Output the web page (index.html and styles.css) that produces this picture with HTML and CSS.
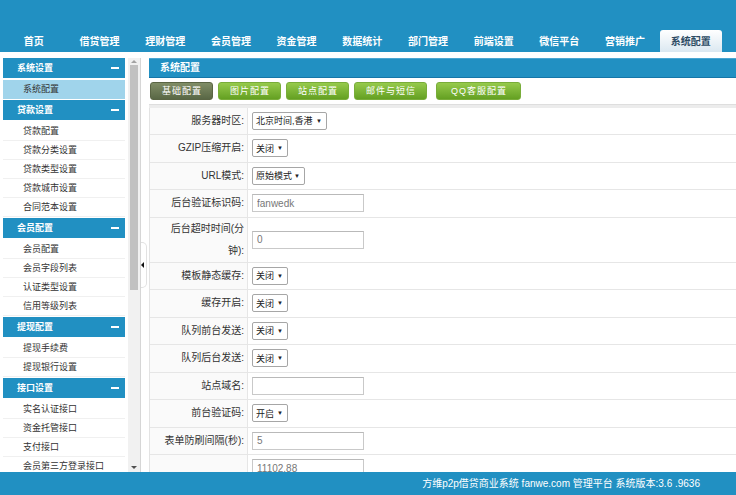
FILE: index.html
```html
<!DOCTYPE html>
<html lang="zh-CN">
<head>
  <meta charset="UTF-8">
  <title>系统配置</title>
  <link rel="stylesheet" href="styles.css">
</head>
<body>

  <div class="topbar">
    <ul class="nav">
      <li>首页</li>
      <li>借贷管理</li>
      <li>理财管理</li>
      <li>会员管理</li>
      <li>资金管理</li>
      <li>数据统计</li>
      <li>部门管理</li>
      <li>前端设置</li>
      <li>微信平台</li>
      <li>营销推广</li>
      <li class="on">系统配置</li>
    </ul>
  </div>

  <div class="main">
    <div class="side">
      <div class="menu">
        <div class="grp">
          <div class="grp-hd">系统设置<i class="minus"></i></div>
          <ul><li class="cur">系统配置</li></ul>
        </div>
        <div class="grp">
          <div class="grp-hd">贷款设置<i class="minus"></i></div>
          <ul>
            <li>贷款配置</li>
            <li>贷款分类设置</li>
            <li>贷款类型设置</li>
            <li>贷款城市设置</li>
            <li>合同范本设置</li>
          </ul>
        </div>
        <div class="grp">
          <div class="grp-hd">会员配置<i class="minus"></i></div>
          <ul>
            <li>会员配置</li>
            <li>会员字段列表</li>
            <li>认证类型设置</li>
            <li>信用等级列表</li>
          </ul>
        </div>
        <div class="grp">
          <div class="grp-hd">提现配置<i class="minus"></i></div>
          <ul>
            <li>提现手续费</li>
            <li>提现银行设置</li>
          </ul>
        </div>
        <div class="grp">
          <div class="grp-hd">接口设置<i class="minus"></i></div>
          <ul>
            <li>实名认证接口</li>
            <li>资金托管接口</li>
            <li>支付接口</li>
            <li>会员第三方登录接口</li>
          </ul>
        </div>
      </div>
      <div class="sbar">
        <span class="arr up"></span>
        <span class="thumb"></span>
        <span class="arr dn"></span>
      </div>
    </div>

    <div class="split"><span class="handle"><i></i></span></div>

    <div class="content">
      <div class="c-hd">系统配置</div>
      <div class="tabs">
        <a class="btn on">基础配置</a>
        <a class="btn">图片配置</a>
        <a class="btn">站点配置</a>
        <a class="btn">邮件与短信</a>
        <a class="btn wide">QQ客服配置</a>
      </div>
      <div class="band"></div>

      <div class="form">
        <div class="row">
          <div class="lbl">服务器时区:</div>
          <div class="val"><span class="sel w75">北京时间,香港<b>▼</b></span></div>
        </div>
        <div class="row">
          <div class="lbl">GZIP压缩开启:</div>
          <div class="val"><span class="sel w36">关闭<b>▼</b></span></div>
        </div>
        <div class="row">
          <div class="lbl">URL模式:</div>
          <div class="val"><span class="sel w53">原始模式<b>▼</b></span></div>
        </div>
        <div class="row">
          <div class="lbl">后台验证标识码:</div>
          <div class="val"><input class="inp" type="text" value="fanwedk"></div>
        </div>
        <div class="row">
          <div class="lbl">后台超时时间(分<br>钟):</div>
          <div class="val"><input class="inp" type="text" value="0"></div>
        </div>
        <div class="row">
          <div class="lbl">模板静态缓存:</div>
          <div class="val"><span class="sel w36">关闭<b>▼</b></span></div>
        </div>
        <div class="row">
          <div class="lbl">缓存开启:</div>
          <div class="val"><span class="sel w36">关闭<b>▼</b></span></div>
        </div>
        <div class="row">
          <div class="lbl">队列前台发送:</div>
          <div class="val"><span class="sel w36">关闭<b>▼</b></span></div>
        </div>
        <div class="row">
          <div class="lbl">队列后台发送:</div>
          <div class="val"><span class="sel w36">关闭<b>▼</b></span></div>
        </div>
        <div class="row">
          <div class="lbl">站点域名:</div>
          <div class="val"><input class="inp" type="text" value=""></div>
        </div>
        <div class="row">
          <div class="lbl">前台验证码:</div>
          <div class="val"><span class="sel w36">开启<b>▼</b></span></div>
        </div>
        <div class="row">
          <div class="lbl">表单防刷间隔(秒):</div>
          <div class="val"><input class="inp" type="text" value="5"></div>
        </div>
        <div class="row last">
          <div class="lbl"></div>
          <div class="val"><input class="inp" type="text" value="11102.88"></div>
        </div>
      </div>
    </div>
  </div>

  <div class="footer">方维p2p借贷商业系统 fanwe.com 管理平台 系统版本:3.6 .9636</div>

</body>
</html>
```

FILE: styles.css
```css
body {
  margin: 0;
  height: 495px;
  overflow: hidden;
  display: flex;
  flex-direction: column;
  background: #fff;
  color: #333;
  font-family: "Liberation Sans", "Noto Sans CJK SC", sans-serif;
  font-size: 10px;
}

/* top navigation */
.topbar {
  height: 52px;
  flex-shrink: 0;
  background: #2190c2;
  display: flex;
  align-items: flex-end;
  padding-left: 1px;
}

.nav {
  list-style: none;
  margin: 0;
  padding: 0;
  display: flex;
}

.nav li {
  width: 61.7px;
  margin: 0 2px;
  height: 22px;
  line-height: 23px;
  text-align: center;
  color: #fff;
  font-weight: bold;
  font-size: 10px;
}

.nav li.on {
  background: linear-gradient(#ffffff, #dbe8f1);
  color: #2b4a63;
  border-radius: 3px 3px 0 0;
}

.main {
  flex: 1;
  min-height: 0;
  display: flex;
  padding-top: 5.7px;
}

/* left menu */
.side {
  width: 137px;
  padding-left: 3px;
  border-right: 1px solid #d6d6d6;
  display: flex;
  flex-shrink: 0;
}

.menu {
  width: 122px;
  margin-right: 3px;
  overflow: hidden;
  font-size: 9px;
}

.grp-hd {
  height: 20px;
  background: #2190c2;
  color: #fff;
  font-weight: bold;
  display: flex;
  align-items: center;
  justify-content: space-between;
  padding: 0 6px 0 14px;
}

.minus {
  width: 8px;
  height: 2px;
  background: #fff;
}

.grp ul {
  list-style: none;
  margin: 0;
  padding: 2px 0 1px;
}

.grp li {
  height: 19px;
  line-height: 19px;
  padding-left: 20px;
  border-bottom: 1px solid #f0f0f0;
  box-sizing: border-box;
  color: #333;
}

.grp li.cur {
  background: #a0d4eb;
  border-bottom-color: #a0d4eb;
}

.sbar {
  width: 12px;
  background: #f1f1f1;
  display: flex;
  flex-direction: column;
  align-items: center;
}

.arr {
  width: 0;
  height: 0;
  border-left: 3px solid transparent;
  border-right: 3px solid transparent;
  margin: 2px 0;
}

.arr.up {
  border-bottom: 3px solid #a3a3a3;
}

.arr.dn {
  margin-top: auto;
  margin-bottom: 3px;
  border-top: 3px solid #505050;
}

.thumb {
  width: 8px;
  height: 225px;
  background: #c1c1c1;
}

.split {
  width: 8px;
  flex-shrink: 0;
  display: flex;
  align-items: center;
}

.handle {
  width: 5px;
  height: 44px;
  border: 1px solid #e2e2e2;
  border-left: none;
  border-radius: 0 5px 5px 0;
  display: flex;
  align-items: center;
}

.handle i {
  width: 0;
  height: 0;
  border-top: 3px solid transparent;
  border-bottom: 3px solid transparent;
  border-right: 3px solid #111;
}

/* content */
.content {
  flex: 1;
  min-width: 0;
  overflow: hidden;
}

.c-hd {
  height: 18px;
  line-height: 18px;
  background: #2190c2;
  border-top: 1px solid #4aa6d3;
  border-bottom: 1px solid #1576a8;
  color: #fff;
  font-weight: bold;
  padding-left: 11px;
}

.tabs {
  display: flex;
  gap: 5px;
  padding: 4px 0 4px 1px;
}

.btn {
  height: 18px;
  line-height: 16px;
  box-sizing: border-box;
  padding: 0 10px 0 11px;
  border: 1px solid #79ad3a;
  border-radius: 3px;
  background: linear-gradient(#96ca4c, #64a022);
  color: #fff;
  font-size: 9px;
  letter-spacing: 1px;
}

.btn.wide {
  margin-left: 4px;
  padding: 0 13px 0 14px;
}

.btn.on {
  border-color: #5a6544;
  background: linear-gradient(#808d66, #596745);
}

.band {
  height: 3px;
  background: #ececec;
  border-top: 1px solid #dedede;
}

.form {
  border-left: 1px solid #e3e3e3;
}

.row {
  display: grid;
  grid-template-columns: 98px 1fr;
  min-height: 26.5px;
  border-bottom: 1px solid #e6e6e6;
}

.lbl {
  background: #fafafa;
  border-right: 1px solid #e6e6e6;
  display: flex;
  align-items: center;
  justify-content: flex-end;
  text-align: right;
  padding-right: 3px;
  line-height: 22px;
}

.val {
  padding: 4px;
  display: flex;
  align-items: center;
}

.sel {
  display: inline-flex;
  align-items: center;
  justify-content: space-between;
  height: 18px;
  box-sizing: border-box;
  border: 1px solid #a6a6a6;
  border-radius: 2px;
  padding: 0 4px 0 3px;
  background: #fff;
  color: #222;
  font-size: 9px;
  white-space: nowrap;
}

.sel b {
  font-size: 6px;
  font-weight: normal;
}

.w75 { width: 75px; }
.w53 { width: 53px; }
.w36 { width: 36px; }

.inp {
  width: 112px;
  height: 18px;
  box-sizing: border-box;
  margin: 0;
  border: 1px solid #c9c9c9;
  border-top-color: #b9b9b9;
  padding: 0 4px;
  color: #777;
  font-family: "Liberation Sans", sans-serif;
  font-size: 10px;
}

.footer {
  height: 23px;
  flex-shrink: 0;
  line-height: 23px;
  background: #2190c2;
  color: #fff;
  text-align: right;
  padding-right: 36px;
}
```
